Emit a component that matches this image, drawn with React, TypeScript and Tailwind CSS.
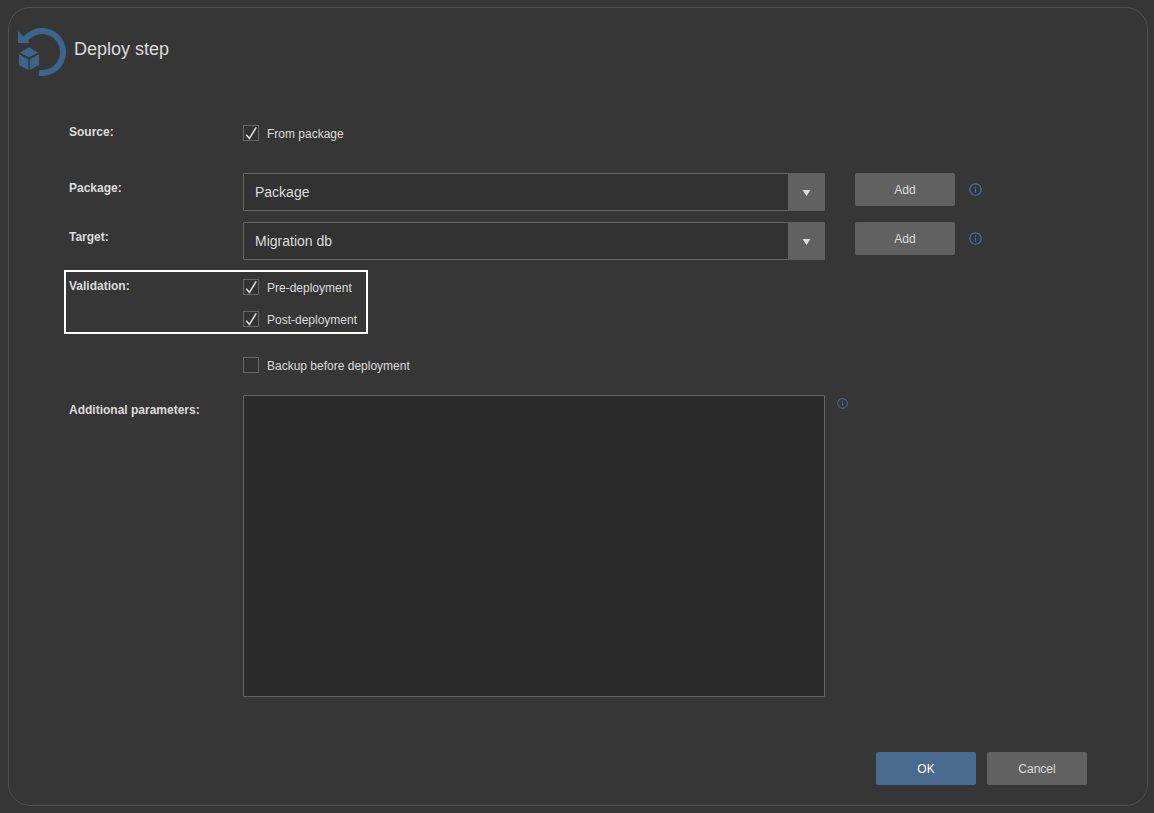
import React, { useState } from "react";

interface CheckboxProps {
  id: string;
  label: string;
  defaultChecked?: boolean;
}

function Checkbox({ id, label, defaultChecked = false }: CheckboxProps) {
  const [checked, setChecked] = useState(defaultChecked);

  return (
    <label htmlFor={id} className="flex h-4 items-start gap-2 leading-[18px] whitespace-nowrap">
      <span className="relative block size-4 shrink-0">
        <input
          id={id}
          type="checkbox"
          checked={checked}
          onChange={(e) => setChecked(e.target.checked)}
          className="block size-4 appearance-none border border-[#686868] bg-[#323232]"
        />
        {checked && (
          <svg viewBox="0 0 16 16" className="pointer-events-none absolute inset-0 size-4" fill="none">
            <path d="M3.2 9.8 6.4 13.4 13.2 2.4" stroke="#dedede" strokeWidth="1.5" />
          </svg>
        )}
      </span>
      {label}
    </label>
  );
}

function Select({ id, options }: { id: string; options: string[] }) {
  return (
    <div className="relative w-[582px]">
      <select
        id={id}
        className="block h-[38px] w-full appearance-none rounded-[1px] border border-[#666666] bg-[#323232] pl-[11px] text-sm text-[#dcdcdc]"
      >
        {options.map((option) => (
          <option key={option}>{option}</option>
        ))}
      </select>
      <span className="pointer-events-none absolute inset-y-0 right-0 flex w-[37px] items-center justify-center rounded-r-[1px] bg-[#616161]">
        <svg viewBox="0 0 10 8" className="h-2 w-[10px]" fill="#dcdcdc">
          <path d="M.5 2h8L4.500 8z" />
        </svg>
      </span>
    </div>
  );
}

function Button({ children, primary = false }: { children: React.ReactNode; primary?: boolean }) {
  return (
    <button
      type="button"
      className={
        primary
          ? "h-[33px] w-[100px] rounded-[2px] bg-[#486a8f] text-white"
          : "h-[33px] w-[100px] rounded-[2px] bg-[#616161] text-[#dcdcdc]"
      }
    >
      {children}
    </button>
  );
}

function InfoIcon({ className = "size-[13px]" }: { className?: string }) {
  return (
    <svg viewBox="0 0 13 13" className={`${className} shrink-0`} fill="none" stroke="#4a76a8" strokeWidth="1.1">
      <circle cx="6.5" cy="6.5" r="5.7" />
      <path d="M6.5 5.5v4M6.5 3.500v1.2" />
    </svg>
  );
}

// Circular arrow around a package cube
function DeployIcon() {
  return (
    <svg viewBox="0 0 48 48" className="size-12 shrink-0" fill="#3d648b">
      <path d="M21 44.790A21 21 0 1 0 6.500 12.400" fill="none" stroke="#3d648b" strokeWidth="6" />
      <path d="M0 3V15H12z" />
      <path d="M11 19.300 20 24.400 11 29.500 2 24.400z" />
      <path d="M1 26.300 10.300 31.600V42.200L1 37z" />
      <path d="M21 26.300 11.700 31.600V42.200L21 37z" />
    </svg>
  );
}

const LABEL = "w-[174px] shrink-0 leading-[14px] font-bold";

export default function App() {
  return (
    <div className="flex min-h-screen bg-[#363636] pt-[7px] pr-[6px] pb-[7px] pl-2 font-['Liberation_Sans',Arial,sans-serif] text-xs text-[#dcdcdc]">
      <main className="flex flex-1 flex-col rounded-[22px] border border-[#505050] pt-5 pb-5">
        <header className="flex gap-2 pl-[9px]">
          <DeployIcon />
          <h1 className="pt-[9px] text-lg leading-6">Deploy step</h1>
        </header>

        <form className="mt-[49px] flex flex-1 flex-col pl-[55px]">
          <div className="flex pl-[5px]">
            <span className={LABEL}>Source:</span>
            <Checkbox id="from-package" label="From package" defaultChecked />
          </div>

          <div className="mt-8 flex items-start pl-[5px]">
            <label htmlFor="package" className={`${LABEL} pt-2`}>
              Package:
            </label>
            <Select id="package" options={["Package"]} />
            <div className="ml-[30px] flex items-center gap-[14px]">
              <Button>Add</Button>
              <InfoIcon />
            </div>
          </div>

          <div className="mt-[11px] flex items-start pl-[5px]">
            <label htmlFor="target" className={`${LABEL} pt-2`}>
              Target:
            </label>
            <Select id="target" options={["Migration db"]} />
            <div className="ml-[30px] flex items-center gap-[14px]">
              <Button>Add</Button>
              <InfoIcon />
            </div>
          </div>

          <div
            role="group"
            aria-labelledby="validation"
            className="mt-[10px] flex w-[304px] border-2 border-white pt-[7px] pb-[5px] pl-[3px]"
          >
            <span id="validation" className={LABEL}>
              Validation:
            </span>
            <div className="flex flex-col gap-4">
              <Checkbox id="pre-deployment" label="Pre-deployment" defaultChecked />
              <Checkbox id="post-deployment" label="Post-deployment" defaultChecked />
            </div>
          </div>

          <div className="mt-[23px] pl-[179px]">
            <Checkbox id="backup" label="Backup before deployment" />
          </div>

          <div className="mt-[22px] flex items-start pl-[5px]">
            <label htmlFor="parameters" className={`${LABEL} pt-2`}>
              Additional parameters:
            </label>
            <textarea
              id="parameters"
              className="block h-[302px] w-[582px] resize-none rounded-[1px] border border-[#666666] bg-[#2b2b2b] p-2"
            />
            <div className="pt-[3px] pl-3">
              <InfoIcon className="size-[11px]" />
            </div>
          </div>

          <div className="mt-auto flex justify-end gap-[11px] pt-5 pr-[60px]">
            <Button primary>OK</Button>
            <Button>Cancel</Button>
          </div>
        </form>
      </main>
    </div>
  );
}
